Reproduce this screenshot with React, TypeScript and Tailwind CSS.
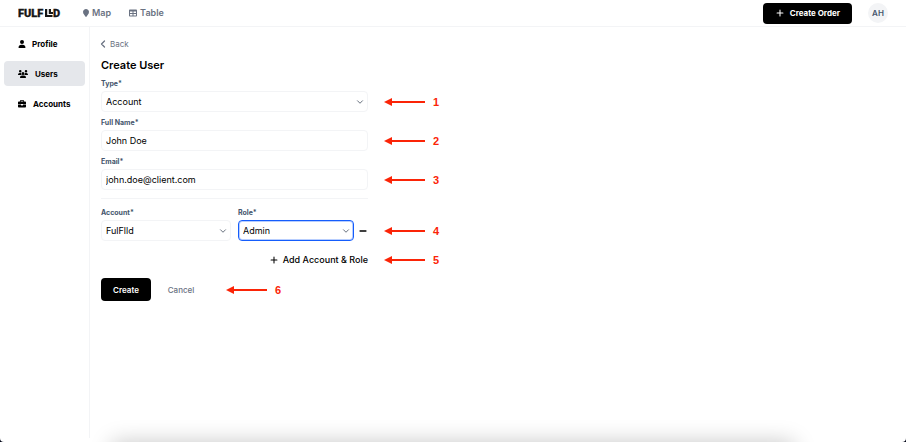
import React, { useState } from 'react';
import { FaBriefcase, FaLocationPin, FaTable, FaUser, FaUsers } from 'react-icons/fa6';
import { ChevronDown, ChevronLeft, Minus, Plus } from 'lucide-react';

interface SelectFieldProps {
  id: string;
  label: string;
  options: string[];
  className?: string;
  focused?: boolean;
}

interface TextFieldProps {
  id: string;
  label: string;
  type: string;
  value: string;
  onChange: (value: string) => void;
}

const Logo = () => (
  <svg className="w-11 h-3 text-neutral-900" viewBox="0 0 44 12" role="img" aria-label="FULFLLD">
    <text x="0" y="10" fontSize="11" fontWeight="900" fontFamily="Roboto, sans-serif" fill="currentColor" stroke="currentColor" strokeWidth="0.300">FULF</text>
    <path d="M27 2H29.200V8H34.500V10H27Z M30.800 2H33V5H35V7H30.800Z" fill="currentColor" />
    <text x="35" y="10" fontSize="11" fontWeight="900" fontFamily="Roboto, sans-serif" fill="currentColor" stroke="currentColor" strokeWidth="0.300">D</text>
  </svg>
);

const Annotation = ({ value }: { value: number }) => (
  <div className="flex h-[21px] items-center text-[#fb2407]">
    <svg className="w-[41px] h-2" viewBox="0 0 41 8">
      <path d="M6 4H41" stroke="currentColor" strokeWidth="2" />
      <path d="M0 4L8 0V8Z" fill="currentColor" />
    </svg>
    <span className="ml-2 font-['Liberation_Sans',sans-serif] text-[11px] leading-3 font-bold">{value}</span>
  </div>
);

const SelectField = ({ id, label, options, className = 'w-full', focused }: SelectFieldProps) => (
  <div className={className}>
    <label htmlFor={id} className="block text-[7px] leading-3 font-bold text-slate-600">{label}</label>
    <div className="relative mt-px">
      <select
        id={id}
        className={`block w-full h-[21px] appearance-none rounded border bg-white px-1 text-[9px] text-black outline-none ${focused ? 'border-blue-600 ring-1 ring-inset ring-blue-600/30' : 'border-gray-100'}`}
      >
        {options.map((option) => (
          <option key={option}>{option}</option>
        ))}
      </select>
      <ChevronDown className="absolute right-[3px] top-1.5 w-2.5 h-2.5 text-gray-600 pointer-events-none" />
    </div>
  </div>
);

const TextField = ({ id, label, type, value, onChange }: TextFieldProps) => (
  <div className="w-full">
    <label htmlFor={id} className="block text-[7px] leading-3 font-bold text-slate-600">{label}</label>
    <input
      id={id}
      type={type}
      value={value}
      onChange={(e) => onChange(e.target.value)}
      className="mt-px block w-full h-[21px] rounded border border-gray-100 px-1 text-[9px] text-black outline-none"
    />
  </div>
);

const Row = ({ note, children }: { note: number; children: React.ReactNode }) => (
  <div className="flex items-end gap-4">
    <div className="flex w-full max-w-[267px] items-end">{children}</div>
    <Annotation value={note} />
  </div>
);

const App = () => {
  const [name, setName] = useState('John Doe');
  const [email, setEmail] = useState('john.doe@client.com');

  return (
    <div className="bg-slate-950">
      <div className="relative flex min-h-screen flex-col overflow-hidden rounded-b bg-white font-[Inter,sans-serif] text-black">
        {/* Header */}
        <header className="flex h-[27px] items-center border-b border-gray-100 px-[18px]">
          <Logo />
          <nav className="ml-5 flex items-center gap-[18px] text-[9px] font-semibold text-gray-500">
            <a href="#map" className="flex items-center gap-0.5">
              <FaLocationPin className="w-2 h-2" />
              Map
            </a>
            <a href="#table" className="flex items-center gap-[3px]">
              <FaTable className="w-2 h-2" />
              Table
            </a>
          </nav>
          <button className="ml-auto flex h-[21px] items-center gap-[5px] rounded bg-black px-3 text-[8px] font-bold text-white">
            <Plus className="w-2.5 h-2.5" strokeWidth={2.5} />
            Create Order
          </button>
          <button className="ml-4 h-5 w-5 rounded-full bg-gray-100 text-[8px] font-semibold text-slate-600">AH</button>
        </header>

        <div className="flex flex-1">
          {/* Sidebar */}
          <aside className="mb-1 flex w-[90px] shrink-0 flex-col gap-[5px] border-r border-gray-100 px-1 pt-1 text-[8px] font-bold">
            <a href="#profile" className="flex h-[25px] items-center gap-1.5 rounded px-3.5">
              <FaUser className="w-2 h-2" />
              Profile
            </a>
            <a href="#users" className="flex h-[25px] items-center gap-[7px] rounded bg-gray-200 px-3.5">
              <FaUsers className="w-2.5 h-2.5" />
              Users
            </a>
            <a href="#accounts" className="flex h-[25px] items-center gap-[7px] rounded px-3.5">
              <FaBriefcase className="w-2 h-2" />
              Accounts
            </a>
          </aside>

          {/* Create user form */}
          <main className="flex-1 pl-[11px] pt-2.5">
            <a href="#back" className="flex h-3.5 items-center gap-px text-[8px] text-gray-500">
              <ChevronLeft className="-ml-1 w-3 h-3" strokeWidth={2.5} />
              Back
            </a>
            <h1 className="mt-1.5 text-[11px] leading-4 font-semibold">Create User</h1>

            <form className="mt-[5px]" onSubmit={(e) => e.preventDefault()}>
              <div className="space-y-[5px]">
                <Row note={1}>
                  <SelectField id="type" label="Type*" options={['Account']} />
                </Row>
                <Row note={2}>
                  <TextField id="name" label="Full Name*" type="text" value={name} onChange={setName} />
                </Row>
                <Row note={3}>
                  <TextField id="email" label="Email*" type="email" value={email} onChange={setEmail} />
                </Row>
              </div>

              <hr className="my-2 max-w-[267px] border-gray-100" />

              <Row note={4}>
                <SelectField id="account" label="Account*" options={['FulFlld']} className="w-[130px]" />
                <SelectField id="role" label="Role*" options={['Admin']} className="ml-[7px] w-[116px]" focused />
                <button type="button" aria-label="Remove" className="ml-auto flex h-[21px] items-center">
                  <Minus className="w-2.5 h-2.5" strokeWidth={3.5} />
                </button>
              </Row>
              <div className="mt-2">
                <Row note={5}>
                  <button type="button" className="ml-auto flex h-[21px] items-center gap-1 text-[9px] font-medium">
                    <Plus className="w-2.5 h-2.5" strokeWidth={2.5} />
                    Add Account &amp; Role
                  </button>
                </Row>
              </div>

              <div className="mt-2 flex items-center">
                <button type="submit" className="h-[23px] w-[50px] rounded bg-black text-[8px] font-semibold text-white">Create</button>
                <button type="button" className="mx-[15px] w-[30px] text-[8px] font-medium text-gray-500">Cancel</button>
                <div className="ml-[15px]">
                  <Annotation value={6} />
                </div>
              </div>
            </form>
          </main>
        </div>

        {/* Bottom glow */}
        <div className="pointer-events-none absolute inset-x-28 -bottom-10 h-10 shadow-[0_0_22px_rgba(0,0,0,0.22)]" />
      </div>
    </div>
  );
};

export default App;
